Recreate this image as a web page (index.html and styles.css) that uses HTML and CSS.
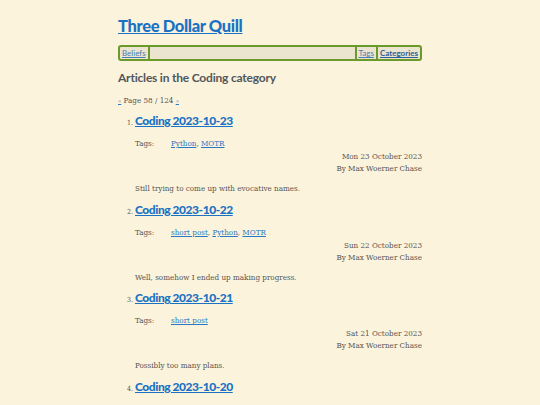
FILE: index.html
```html
<!DOCTYPE html>
<html>
<head>
<meta charset="utf-8">
<link rel="stylesheet" href="styles.css">
</head>
<body>
<div class="page">
  <h1 class="site-title"><a href="#">Three Dollar Quill</a></h1>
  <nav class="nav">
    <a class="nav-link" href="#">Beliefs</a>
    <span class="nav-spacer"></span>
    <a class="nav-link" href="#">Tags</a>
    <a class="nav-link current" href="#">Categories</a>
  </nav>
  <h2 class="section-title">Articles in the Coding category</h2>
  <p class="pager"><a href="#">«</a> Page 58 / 124 <a href="#">»</a></p>
  <ol class="articles">
    <li class="article">
      <h3 class="article-title"><a href="#">Coding 2023-10-23</a></h3>
      <div class="tags"><span class="tags-label">Tags:</span><span><a href="#">Python</a>, <a href="#">MOTR</a></span></div>
      <div class="meta"><div>Mon 23 October 2023</div><div>By Max Woerner Chase</div></div>
      <p class="summary">Still trying to come up with evocative names.</p>
    </li>
    <li class="article">
      <h3 class="article-title"><a href="#">Coding 2023-10-22</a></h3>
      <div class="tags"><span class="tags-label">Tags:</span><span><a href="#">short post</a>, <a href="#">Python</a>, <a href="#">MOTR</a></span></div>
      <div class="meta"><div>Sun 22 October 2023</div><div>By Max Woerner Chase</div></div>
      <p class="summary">Well, somehow I ended up making progress.</p>
    </li>
    <li class="article">
      <h3 class="article-title"><a href="#">Coding 2023-10-21</a></h3>
      <div class="tags"><span class="tags-label">Tags:</span><span><a href="#">short post</a></span></div>
      <div class="meta"><div>Sat 21 October 2023</div><div>By Max Woerner Chase</div></div>
      <p class="summary">Possibly too many plans.</p>
    </li>
    <li class="article">
      <h3 class="article-title"><a href="#">Coding 2023-10-20</a></h3>
      <div class="tags"><span class="tags-label">Tags:</span><span><a href="#">short post</a></span></div>
      <div class="meta"><div>Fri 20 October 2023</div><div>By Max Woerner Chase</div></div>
      <p class="summary">More planning.</p>
    </li>
  </ol>
</div>
</body>
</html>
```
FILE: styles.css
```css
html, body {
  margin: 0;
  padding: 0;
  background: #fcf3dc;
}
body {
  font-family: "DejaVu Serif", serif;
  font-stretch: condensed;
  color: #555553;
  font-size: 8px;
}
.page {
  width: 304px;
  margin: 0 auto;
  padding-top: 14px;
}
a {
  color: #2a78c2;
}
.site-title {
  margin: 0;
  font-family: Lato, sans-serif;
  font-weight: 900;
  font-size: 16.5px;
  line-height: 24px;
  letter-spacing: -0.35px;
}
.site-title a {
  color: #1a72c4;
}
.nav {
  margin-top: 7px;
  display: flex;
  align-items: stretch;
  border: 2px solid #6a9a2a;
  border-radius: 3px;
  background: #ebe4cf;
  height: 12px;
  font-family: Lato, sans-serif;
  font-stretch: normal;
  font-size: 8px;
  line-height: 12px;
}
.nav-link {
  padding: 0 2px;
  color: #4a7fb5;
  border-right: 2px solid #6a9a2a;
}
.nav-link.current {
  border-right: none;
  font-weight: 700;
  color: #2a5f96;
}
.nav-spacer {
  flex: 1;
  border-right: 2px solid #6a9a2a;
}
.section-title {
  margin: 8px 0 0;
  font-family: Lato, sans-serif;
  font-weight: 700;
  font-size: 12px;
  line-height: 18px;
  letter-spacing: -0.2px;
  color: #50575c;
}
.pager {
  margin: 9px 0 0;
  font-size: 8px;
  line-height: 10px;
}
.pager a {
  font-size: 6px;
}
.articles {
  margin: 6px 0 0;
  padding-left: 17px;
  font-size: 7px;
}
.article-title {
  margin: 0;
  font-family: Lato, sans-serif;
  font-weight: 900;
  font-size: 12px;
  line-height: 18px;
  letter-spacing: -0.45px;
}
.article-title a {
  color: #1a72c4;
}
.tags {
  margin-top: 9px;
  display: flex;
  font-size: 8px;
  line-height: 10px;
}
.tags-label {
  width: 36px;
}
.meta {
  margin-top: 2px;
  text-align: right;
  font-size: 8px;
  line-height: 12px;
}
.summary {
  margin: 9px 0 6.7px;
  font-size: 8px;
  line-height: 10px;
}
```
